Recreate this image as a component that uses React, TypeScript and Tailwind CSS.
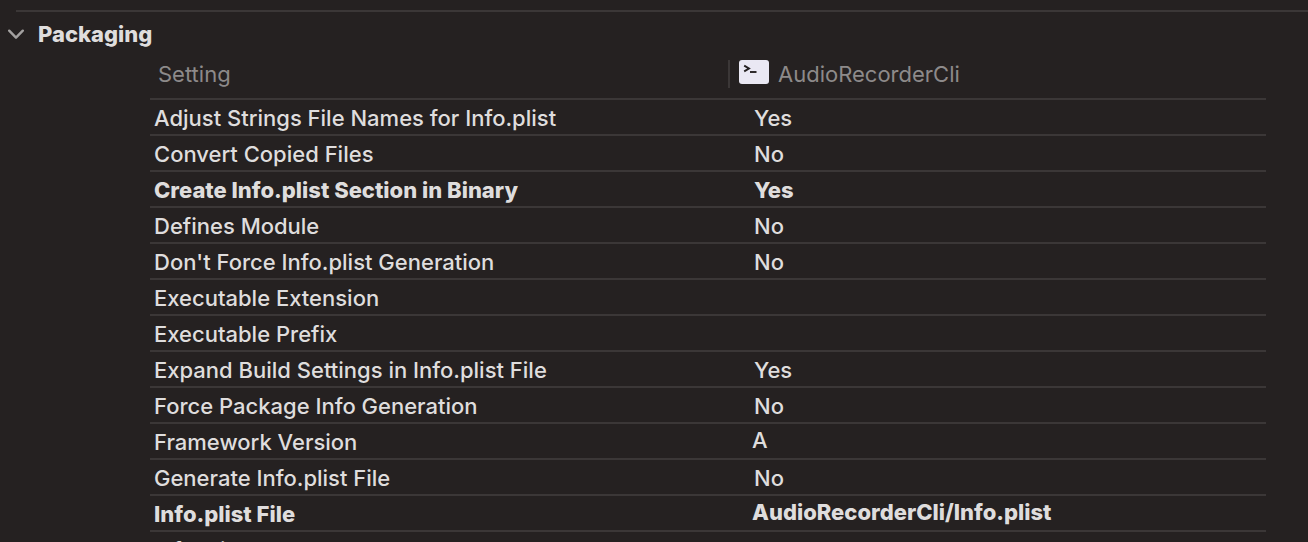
import { useState } from "react";

type Setting = {
  name: string;
  value: string;
  kind?: "text";
  custom?: boolean;
};

const settings: Setting[] = [
  { name: "Adjust Strings File Names for Info.plist", value: "Yes" },
  { name: "Convert Copied Files", value: "No" },
  { name: "Create Info.plist Section in Binary", value: "Yes", custom: true },
  { name: "Defines Module", value: "No" },
  { name: "Don't Force Info.plist Generation", value: "No" },
  { name: "Executable Extension", value: "" },
  { name: "Executable Prefix", value: "" },
  { name: "Expand Build Settings in Info.plist File", value: "Yes" },
  { name: "Force Package Info Generation", value: "No" },
  { name: "Framework Version", value: "A", kind: "text" },
  { name: "Generate Info.plist File", value: "No" },
  { name: "Info.plist File", value: "AudioRecorderCli/Info.plist", kind: "text", custom: true },
  { name: "Info.plist Other Preprocessor Flags", value: "" },
];

function Chevron() {
  return (
    <svg className="h-3 w-4" viewBox="0 0 16 12" fill="none" aria-hidden="true">
      <path d="M1.2 2.7 8 9.7l6.800-7" stroke="#a3a1a0" strokeWidth="2.400" strokeLinecap="round" strokeLinejoin="round" />
    </svg>
  );
}

function TerminalIcon() {
  return (
    <svg className="h-6 w-[30px] shrink-0" viewBox="0 0 30 24" fill="none" aria-hidden="true">
      <rect width="30" height="24" rx="3" fill="#eae8f3" />
      <path d="M5.200 5.600 10 8.500l-4.800 2.900" stroke="#252121" strokeWidth="1.900" />
      <path d="M11 12h6.500" stroke="#252121" strokeWidth="1.900" />
    </svg>
  );
}

function SettingRow({ setting }: { setting: Setting }) {
  const weight = setting.custom ? "font-extrabold" : "font-medium";

  return (
    <tr className="h-9 border-b-2 border-[#3b3737]">
      <th scope="row" className={`truncate p-0 pt-0.5 pl-1 text-left ${weight}`}>
        {setting.name}
      </th>
      <td className={`truncate p-0 ${weight} ${setting.kind === "text" ? "pb-0.5 pl-6" : "pt-0.5 pl-[26px]"}`}>
        {setting.value}
      </td>
    </tr>
  );
}

export default function App() {
  const [open, setOpen] = useState(true);

  return (
    <main className="h-screen overflow-hidden bg-[#252121] pt-2.5 font-['Inter',sans-serif] text-[22px] leading-8 text-[#dfdddd]">
      <hr className="ml-4 border-t-2 border-[#3b3737]" />
      <h2 className="mt-1.5 font-extrabold">
        <button
          type="button"
          aria-expanded={open}
          onClick={() => setOpen(!open)}
          className="flex items-center gap-3.5 pl-2"
        >
          <span className={open ? "" : "-rotate-90"}>
            <Chevron />
          </span>
          Packaging
        </button>
      </h2>
      {open && (
        <div className="pr-[42px] pl-[150px]">
          <table className="w-full table-fixed border-collapse">
            <thead>
              <tr className="h-[49px] border-b-2 border-[#3b3737] text-[#8d8a8a]">
                <th scope="col" className="w-[578px] p-0 pl-2 text-left font-normal">
                  Setting
                </th>
                <th scope="col" className="p-0 text-left font-normal">
                  <div className="flex h-7 items-center border-l-2 border-[#3b3737] pl-[9px]">
                    <span className="pb-1">
                      <TerminalIcon />
                    </span>
                    <span className="pl-[9px]">AudioRecorderCli</span>
                  </div>
                </th>
              </tr>
            </thead>
            <tbody>
              {settings.map((setting) => (
                <SettingRow key={setting.name} setting={setting} />
              ))}
            </tbody>
          </table>
        </div>
      )}
    </main>
  );
}
